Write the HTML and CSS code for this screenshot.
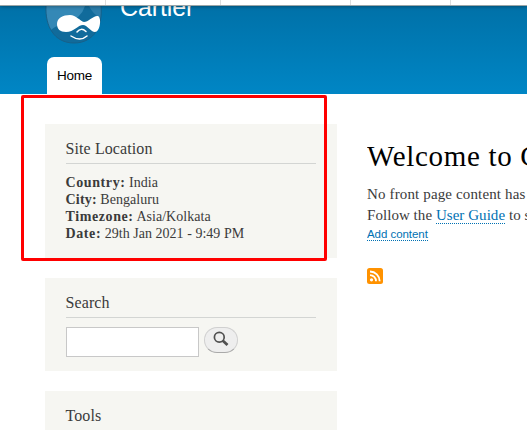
FILE: index.html
```html
<!DOCTYPE html>
<html lang="en">
<head>
<meta charset="utf-8">
<title>Cartier</title>
<link rel="stylesheet" href="styles.css">
</head>
<body>
<div class="toolbar"><i></i><i></i><i></i><i></i></div>
<header class="header">
  <div class="branding">
    <svg class="logo" width="58" height="38" viewBox="0 0 58 38">
      <defs><clipPath id="drop"><path d="M1 0C0 20 9 37 29 37S58 20 56 0Z"/></clipPath></defs>
      <g clip-path="url(#drop)">
        <path d="M0 0H58V38H0Z" fill="#116b9b"/>
        <path d="M0 0H40Q36 13 21 17T5 26Q0 15 0 0Z" fill="#3488b6"/>
        <path d="M44 0Q47 7 56 13V0Z" fill="#2b7dab"/>
      </g>
      <path d="M1 0C0 20 9 37 29 37S58 20 56 0" fill="none" stroke="#17618a"/>
      <path d="M25 9C31 9 35 15 39 16C43 16 49 9 53 10C57 12 55 26 50 26C46 26 42 19 38 19C33 19 29 26 21 26C15 26 12 23 12 18C12 12 18 9 25 9Z" fill="#fff"/>
      <path d="M32 26Q36 21 41 25.500M26 30Q35 36 42 30" fill="none" stroke="#fff" stroke-width="1.5" stroke-linecap="round"/>
    </svg>
    <div class="site-name">Cartier</div>
  </div>
  <nav><a class="tab">Home</a></nav>
</header>
<div class="page">
  <aside class="sidebar">
    <section class="block location">
      <h2>Site Location</h2>
      <div class="row"><b>Country:</b> India</div>
      <div class="row city"><b>City:</b> Bengaluru</div>
      <div class="row"><b>Timezone:</b> Asia/Kolkata</div>
      <div class="row"><b>Date:</b> 29th Jan 2021 - 9:49 PM</div>
    </section>
    <section class="block search">
      <h2>Search</h2>
      <form class="search-form">
        <input type="text" aria-label="Search">
        <button type="button" aria-label="Search">
          <svg width="16" height="16" viewBox="0 0 16 16" fill="none" stroke="#505050"><circle cx="6.3" cy="6.2" r="4.9" stroke-width="1.7"/><path d="M9.600 9.500L14.500 14" stroke-width="2.8"/></svg>
        </button>
      </form>
    </section>
    <section class="block tools"><h2>Tools</h2></section>
  </aside>
  <main class="content">
    <h1>Welcome to C</h1>
    <p class="intro">No front page content has</p>
    <p>Follow the <a>User Guide</a> to s</p>
    <div class="add"><a>Add content</a></div>
    <svg class="feed" width="16" height="16" viewBox="0 0 16 16"><rect width="16" height="16" rx="2.5" fill="#ff9200"/><circle cx="4.5" cy="11.8" r="1.6" fill="#fff"/><path d="M3 7.200A6 6 0 0 1 9 13.300M3 3.500A9.800 9.800 0 0 1 12.700 13.300" fill="none" stroke="#fff" stroke-width="1.8"/></svg>
  </main>
</div>
<div class="highlight"></div>
</body>
</html>
```
FILE: styles.css
```css
* { box-sizing: border-box; }
html, body { height: 430px; overflow: hidden; }
body { margin: 0; background: #fff; color: #3b3b3b; font-family: Georgia, "Liberation Serif", serif; }
.toolbar { display: grid; grid-template-columns: 106px 115px 130px 100px; height: 6px; border-bottom: 1px solid #9ba5a7; background: #fff; position: relative; box-shadow: 0 0 4px rgba(0,0,0,.45); z-index: 2; }
.toolbar i { border-right: 1px solid #ddd; }
.header { height: 88px; background: linear-gradient(#0071a8, #0086c5); display: flex; flex-direction: column; justify-content: space-between; padding-left: 45px; overflow: hidden; }
.branding { display: flex; height: 38px; }
.site-name { margin: -13px 0 0 17px; font: 25px/29px "Liberation Sans", sans-serif; color: #fff; letter-spacing: -.1px; }
.tab { display: block; width: 55px; height: 37px; margin-left: 2px; border-radius: 7px 7px 0 0; background: #fff; color: #000; font: 13.5px/37px "Liberation Sans", sans-serif; text-align: center; letter-spacing: -.3px; }
.page { display: flex; }
.sidebar { width: 292px; margin: 30px 0 0 45px; display: flex; flex-direction: column; gap: 20px; flex: none; }
.block { background: #f6f6f2; padding: 15px 21px 0 20.5px; }
.location { height: 134px; }
.search { height: 93px; }
.tools { height: 60px; }
h2 { margin: 0; height: 25px; font-size: 16px; line-height: 20px; font-weight: normal; border-bottom: 1px solid #d3d5d3; letter-spacing: .1px; }
.location h2 { margin-bottom: 10px; }
.row { font-size: 14px; line-height: 17px; white-space: nowrap; letter-spacing: .03px; }
.row b { letter-spacing: .6px; }
.row.city b { letter-spacing: .2px; }
.search-form { display: flex; align-items: flex-start; gap: 5px; margin: 9px 0 0; }
input { width: 133px; height: 30px; border: 1px solid #c8c8c8; background: #fff; padding: 0; }
button { width: 34px; height: 26px; padding: 0 0 2px; border: 1px solid #d0d0d0; border-bottom-color: #a9a9a9; border-radius: 13px; background: #eee; display: flex; align-items: center; justify-content: center; }
.content { flex: 1; min-width: 0; overflow: hidden; margin: 46px 0 0 30px; }
h1 { margin: 0 0 11px; font-size: 29px; line-height: 33px; font-weight: normal; color: #000; letter-spacing: .68px; white-space: nowrap; }
p { margin: 0; font-size: 15px; line-height: 21px; white-space: nowrap; letter-spacing: .05px; }
.intro { letter-spacing: .14px; }
a { color: #0071b3; }
p a, .add a { border-bottom: 1px dotted #0071b3; }
.add { font: 11.5px/15px "Liberation Sans", sans-serif; height: 17px; margin-top: 1px; letter-spacing: -.05px; }
.feed { display: block; margin-top: 24px; }
.highlight { position: absolute; left: 21px; top: 95px; width: 306px; height: 166px; border: 3px solid #f00; border-radius: 2px; }
```
